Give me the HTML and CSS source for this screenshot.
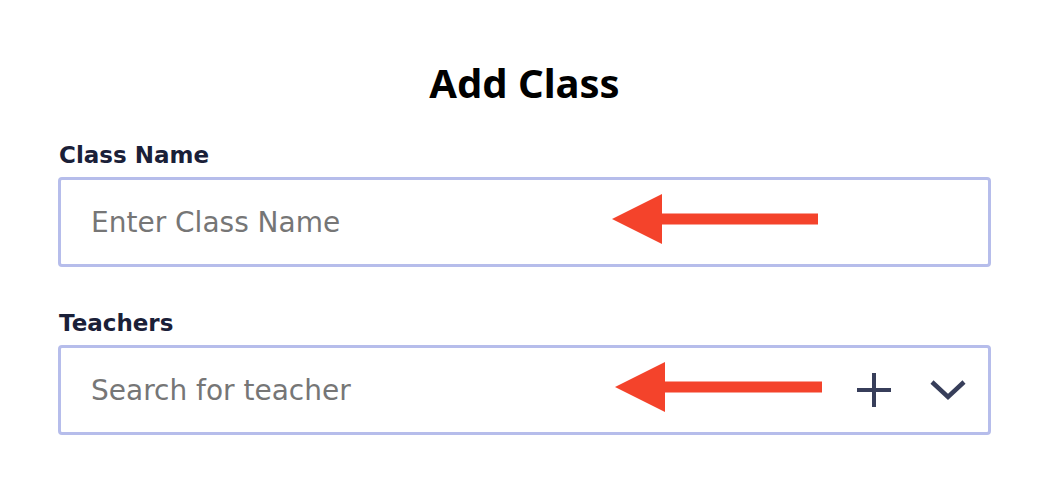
FILE: index.html
```html
<!DOCTYPE html>
<html lang="en">
<head>
  <meta charset="UTF-8" />
  <title>Add Class</title>
  <link rel="stylesheet" href="styles.css">
</head>
<body>
  <form class="add-class">
    <h1 class="title">Add Class</h1>

    <label class="field-label" for="class-name">Class Name</label>
    <div class="field">
      <input type="text" id="class-name" placeholder="Enter Class Name">
      <svg class="pointer pointer-name" width="210" height="52" viewBox="0 0 210 52">
        <polygon points="0,26 50,1 50,51" fill="#f4432b"/>
        <rect x="49" y="20.5" width="157" height="11" fill="#f4432b"/>
      </svg>
    </div>

    <label class="field-label teachers-label" for="teacher-search">Teachers</label>
    <div class="field">
      <input type="text" id="teacher-search" placeholder="Search for teacher">
      <svg class="pointer pointer-teacher" width="210" height="52" viewBox="0 0 210 52">
        <polygon points="0,26 50,1 50,51" fill="#f4432b"/>
        <rect x="49" y="20.5" width="158" height="11" fill="#f4432b"/>
      </svg>
      <div class="actions">
        <svg class="icon-plus" width="36" height="36" viewBox="0 0 36 36">
          <path d="M18 1v34M1 18h34" stroke="#373e5a" stroke-width="4" fill="none"/>
        </svg>
        <svg class="icon-chevron" width="36" height="24" viewBox="0 0 36 24">
          <path d="M2 4l16 15L34 4" stroke="#373e5a" stroke-width="4.5" fill="none"/>
        </svg>
      </div>
    </div>
  </form>
</body>
</html>
```

FILE: styles.css
```css
html, body {
  margin: 0;
  padding: 0;
  background-color: white;
  font-family: "DejaVu Sans", "Noto Sans", sans-serif;
}

.add-class {
  width: 933px;
  margin-left: 58px;
  padding-top: 59px;
  display: flex;
  flex-direction: column;
}

.title {
  margin: 0 0 34px 0;
  font-family: "Noto Sans", sans-serif;
  font-size: 40px;
  line-height: 48px;
  font-weight: 700;
  text-align: center;
  color: black;
}

.field-label {
  font-size: 23px;
  line-height: 28px;
  font-weight: 700;
  color: #1a2038;
  padding-left: 1px;
  margin-bottom: 8px;
}

.teachers-label {
  margin-top: 42px;
}

.field {
  position: relative; /* arrows sit over the field */
  height: 84px;
  border: 3px solid #b6bdeb;
  border-radius: 4px;
  display: flex;
  align-items: center;
  padding: 0 22px 0 30px;
}

.field input {
  flex: 1;
  border: none;
  outline: none;
  padding: 0;
  font-family: inherit;
  font-size: 28px;
  color: #333;
  background: transparent;
}

.field input::placeholder {
  color: #767676;
}

.pointer {
  position: absolute;
  top: 13px;
}

.pointer-name {
  left: 551px;
}

.pointer-teacher {
  left: 554px;
}

.actions {
  display: flex;
  align-items: center;
  gap: 38px;
}
```
